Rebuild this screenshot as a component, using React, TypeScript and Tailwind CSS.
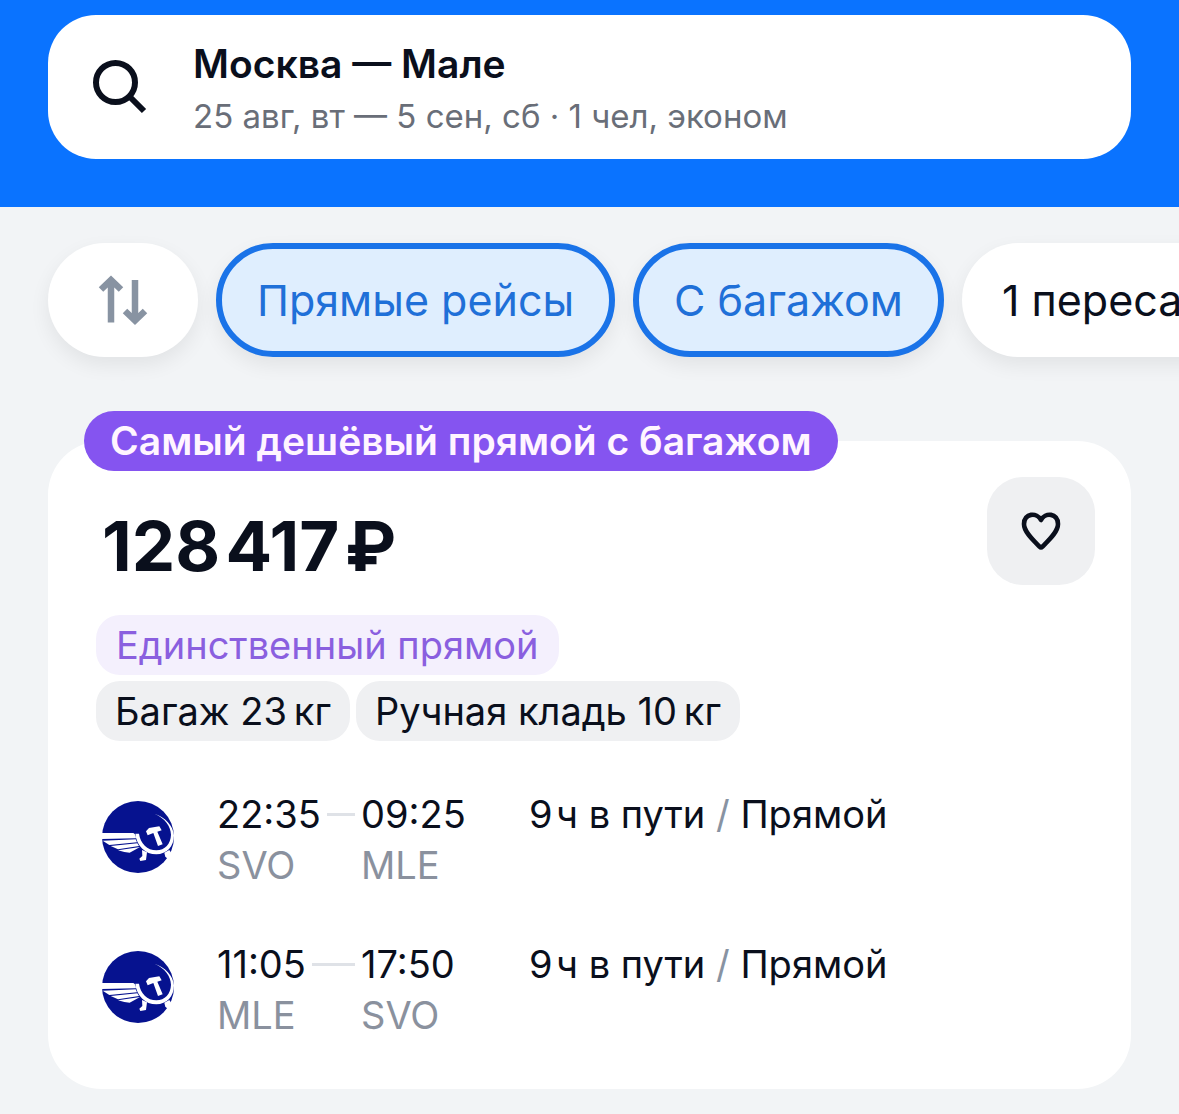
import React from "react";

function SearchIcon() {
  return (
    <svg width="60" height="60" viewBox="0 0 60 60" fill="none" stroke="#0a0f1c" strokeWidth="6" aria-hidden="true">
      <circle cx="25.500" cy="25.500" r="19.500" />
      <path d="M39.500 39.500L54 54" />
    </svg>
  );
}

function SortIcon() {
  return (
    <svg width="50" height="50" viewBox="0 0 50 50" fill="none" stroke="#8893a2" strokeWidth="6.500" aria-hidden="true">
      <path d="M13 47.500V5M3 14.500L13 5L23 14.500" />
      <path d="M37 5V46M27 36L37 45.500L47 36" />
    </svg>
  );
}

function HeartIcon() {
  return (
    <svg width="40" height="40" viewBox="0 0 40 40" fill="none" stroke="#0a0f1c" strokeWidth="4.600" strokeLinecap="round" strokeLinejoin="round" aria-hidden="true">
      <path d="M20 9C16 1 3 2 3 13C3 21 12 29 18.500 35.500Q20 37 21.500 35.500C28 29 37 21 37 13C37 2 24 1 20 9Z" />
    </svg>
  );
}

function AirlineLogo() {
  return (
    <svg width="72" height="72" viewBox="36 33 216 216" role="img" aria-label="Аэрофлот" className="mt-3 shrink-0">
      <circle cx="144" cy="141" r="108" fill="#06128f" />
      <g fill="#fff">
        <path d="M36 129H130Q135 131 137 138L138 145L36 147Z" />
        <path d="M38 152L137 148L141 157L58 165Z" />
        <path d="M62 168L142 160L147 168L84 178Z" />
        <path d="M84 181L150 171L119 188L103 186Z" />
        <path d="M193 71C226 82 249 106 252 136C252 170 230 193 199 193C166 193 139 167 136 131L147 131C151 160 172 181 199 181C225 180 242 162 243 134C242 108 225 84 193 71Z" />
        <path d="M156 180L171 187L168 210L151 213L148 206L157 198Z" />
        <path d="M223 188L238 180L244 190L235 208L226 200Z" />
        <path d="M168 124L177 114L208 109L215 121L202 125L218 163L204 168L190 129L173 136Z" />
      </g>
    </svg>
  );
}

function Tag({ children, accent = false }: { children: React.ReactNode; accent?: boolean }) {
  return (
    <span
      className={
        accent
          ? "flex h-15 items-center rounded-3xl bg-[#f4f0fd] px-5 text-[38px] text-[#8a5fdf]"
          : "flex h-15 items-center rounded-3xl bg-[#eff0f2] px-[19px] text-[38px] text-[#0a0f1c]"
      }
    >
      {children}
    </span>
  );
}

type Leg = { depart: string; arrive: string; from: string; to: string };

const legs: Leg[] = [
  { depart: "22:35", arrive: "09:25", from: "SVO", to: "MLE" },
  { depart: "11:05", arrive: "17:50", from: "MLE", to: "SVO" },
];

function FlightLeg({ leg }: { leg: Leg }) {
  return (
    <div className="flex items-start pl-1.5">
      <AirlineLogo />
      <div className="ml-[43px] grid grid-cols-[144px_168px_auto] text-[38px] leading-[51px] whitespace-nowrap">
        <div className="flex items-center">
          {leg.depart}
          <span className="mx-1.5 h-[3px] flex-1 bg-[#dfe2e7]" />
        </div>
        <div>{leg.arrive}</div>
        <div>
          9{"\u200A"}ч в пути <span className="text-[#8893a2]">/</span> Прямой
        </div>
        <div className="text-[#8a919e]">{leg.from}</div>
        <div className="text-[#8a919e]">{leg.to}</div>
      </div>
    </div>
  );
}

export default function App() {
  return (
    <div className="min-h-screen overflow-hidden bg-[#f2f4f6] pb-6 font-['Inter','Liberation_Sans',sans-serif] text-[#0a0f1c]">
      <header className="bg-[#0a73ff] px-12 pt-[15px] pb-12">
        <button type="button" className="flex h-36 w-full items-center rounded-[48px] bg-white pl-[42px] text-left">
          <SearchIcon />
          <span className="ml-[43px] flex flex-col pt-1 whitespace-nowrap">
            <span className="text-[39px] leading-[54px] font-semibold">Москва — Мале</span>
            <span className="text-[33px] leading-[51px] text-[#696e78]">25 авг, вт — 5 сен, сб · 1 чел, эконом</span>
          </span>
        </button>
      </header>

      <nav className="flex gap-[18px] pt-9 pl-12 text-[43px] whitespace-nowrap">
        <button type="button" aria-label="Сортировка" className="flex h-[114px] w-[150px] shrink-0 items-center justify-center rounded-full bg-white shadow-[0_8px_20px_rgba(0,0,0,0.07)]">
          <SortIcon />
        </button>
        <button type="button" aria-pressed="true" className="h-[114px] shrink-0 rounded-full border-[6px] border-[#1a73e8] bg-[#dfeefe] px-[35px] text-[#1f70d8] shadow-[0_8px_20px_rgba(0,0,0,0.07)]">
          Прямые рейсы
        </button>
        <button type="button" aria-pressed="true" className="h-[114px] shrink-0 rounded-full border-[6px] border-[#1a73e8] bg-[#dfeefe] px-[35px] text-[#1f70d8] shadow-[0_8px_20px_rgba(0,0,0,0.07)]">
          С багажом
        </button>
        <button type="button" className="h-[114px] shrink-0 rounded-full bg-white px-10 shadow-[0_8px_20px_rgba(0,0,0,0.07)]">
          1 пересадка
        </button>
      </nav>

      <main className="px-12 pt-[84px]">
        <article className="relative rounded-[54px] bg-white px-12 pt-9 pb-12">
          <div className="absolute -top-[30px] left-9 flex h-15 items-center rounded-full bg-[#8554f0] px-[26px] text-[39px] font-semibold whitespace-nowrap text-[#fff5ff]">
            Самый дешёвый прямой с багажом
          </div>
          <div className="-mr-3 flex items-start justify-between">
            <h2 className="pt-6 pl-1.5 text-[69px] leading-[90px] font-bold">128{"\u200A"}417{"\u200A"}₽</h2>
            <button type="button" aria-label="В избранное" className="flex size-[108px] items-center justify-center rounded-[36px] bg-[#eff0f2]">
              <HeartIcon />
            </button>
          </div>
          <div className="mt-6 flex flex-col items-start gap-1.5 whitespace-nowrap">
            <Tag accent>Единственный прямой</Tag>
            <div className="flex gap-1.5">
              <Tag>Багаж 23{"\u2009"}кг</Tag>
              <Tag>Ручная кладь 10{"\u2009"}кг</Tag>
            </div>
          </div>
          <div className="mt-12 flex flex-col gap-12">
            {legs.map((leg) => (
              <FlightLeg key={leg.depart} leg={leg} />
            ))}
          </div>
        </article>
      </main>
    </div>
  );
}
